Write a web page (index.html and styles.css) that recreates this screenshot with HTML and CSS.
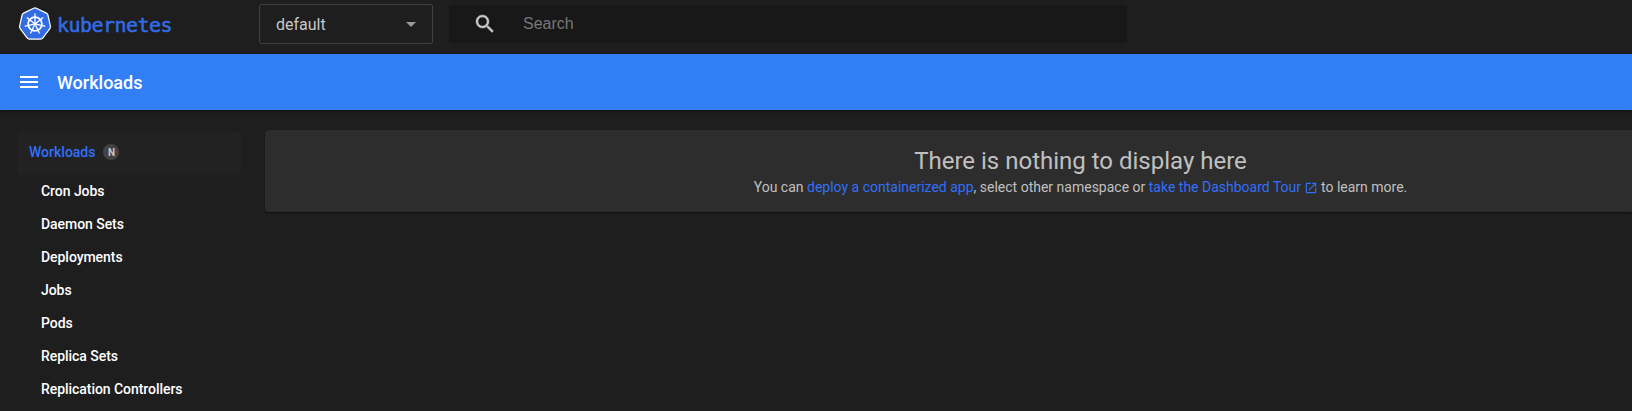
FILE: index.html
```html
<!DOCTYPE html>
<html lang="en">
<head>
<meta charset="utf-8">
<title>Kubernetes Dashboard</title>
<link rel="stylesheet" href="styles.css">
</head>
<body>
<header class="topbar">
  <a class="brand">
    <svg class="brand-logo" viewBox="0 0 34 34">
      <path d="M15.7 1.2Q17 .6 18.3 1.2L28.4 6.1Q29.6 6.7 29.9 8L32.4 19.2Q32.7 20.5 31.8 21.6L24.9 30.9Q24 32.1 22.6 32.1H11.4Q10 32.1 9.1 30.9L2.2 21.6Q1.3 20.5 1.6 19.2L4.1 8Q4.4 6.7 5.6 6.1Z" fill="#326ce5" stroke="#fff" stroke-width="1.2"/>
      <g fill="none" stroke="#fff" stroke-linecap="round">
        <circle cx="17" cy="17" r="6.9" stroke-width="1.7"/>
        <path stroke-width="1.3" d="M17 15V7M18.6 15.8L24.8 10.8M18.9 17.4L26.8 19.2M17.9 18.8L21.3 26M16.1 18.8L12.7 26M15.1 17.4L7.2 19.2M15.4 15.8L9.2 10.8"/>
      </g>
      <circle cx="17" cy="17" r="1.8" fill="#fff"/>
    </svg>
    <span class="brand-name">kubernetes</span>
  </a>
  <div class="namespace"><span>default</span><i class="caret"></i></div>
  <div class="search">
    <svg class="search-icon" viewBox="0 0 24 24"><path d="M15.5 14h-.79l-.28-.27C15.41 12.59 16 11.11 16 9.5 16 5.91 13.09 3 9.5 3S3 5.91 3 9.5 5.91 16 9.5 16c1.61 0 3.09-.59 4.23-1.57l.27.28v.79l5 4.99L20.49 19l-4.99-5zm-6 0C7.01 14 5 11.99 5 9.5S7.01 5 9.5 5 14 7.01 14 9.5 11.99 14 9.5 14z"/></svg>
    <span>Search</span>
  </div>
</header>
<div class="actionbar">
  <svg class="menu-icon" viewBox="0 0 24 24"><path d="M3 18h18v-2H3v2zm0-5h18v-2H3v2zm0-7v2h18V6H3z"/></svg>
  <h1 class="page-title">Workloads</h1>
</div>
<div class="layout">
  <nav class="sidebar">
    <a class="nav-group">Workloads <span class="badge">N</span></a>
    <a class="nav-item">Cron Jobs</a>
    <a class="nav-item">Daemon Sets</a>
    <a class="nav-item">Deployments</a>
    <a class="nav-item">Jobs</a>
    <a class="nav-item">Pods</a>
    <a class="nav-item">Replica Sets</a>
    <a class="nav-item">Replication Controllers</a>
  </nav>
  <main class="card">
    <h2 class="card-title">There is nothing to display here</h2>
    <p class="card-text">You can <a class="link">deploy a containerized app</a>, select other namespace or <a class="link">take the Dashboard Tour <svg class="open-icon" viewBox="0 0 24 24"><path d="M19 19H5V5h7V3H5c-1.11 0-2 .9-2 2v14c0 1.1.89 2 2 2h14c1.1 0 2-.9 2-2v-7h-2v7zM14 3v2h3.59l-9.83 9.83 1.41 1.41L19 6.41V10h2V3h-7z"/></svg></a> to learn more.</p>
  </main>
</div>
</body>
</html>
```

FILE: styles.css
```css
* { box-sizing: border-box; }
body {
  margin: 0;
  height: 411px;
  overflow: hidden;
  background: #1e1e1e;
  color: #fff;
  font: 14px/20px Roboto, sans-serif;
}
.topbar {
  display: flex;
  height: 54px;
  padding: 4px 0 0 18px;
}
.brand {
  display: flex;
  width: 241px;
  padding-top: 3px;
}
.brand-logo { width: 34px; height: 34px; }
.brand-name {
  margin-left: 5px;
  color: #326ce5;
  font: 20px/36px "DejaVu Sans Mono", monospace;
  letter-spacing: -.55px;
  -webkit-text-stroke: .5px #326ce5;
}
.namespace {
  display: flex;
  align-items: center;
  justify-content: space-between;
  width: 174px;
  height: 40px;
  padding: 1px 16px 0;
  border: 1px solid #404040;
  border-radius: 2px;
  color: #c7c7c7;
  font-size: 16px;
}
.caret {
  border: 5px solid transparent;
  border-top-color: #999;
  border-bottom: 0;
}
.search {
  display: flex;
  align-items: center;
  width: 678px;
  height: 38px;
  margin: 1px 0 0 16px;
  padding: 0 24px;
  border-radius: 3px;
  background: #181818;
  color: #777;
  font: 16px "Liberation Sans", Arial, sans-serif;
}
.search-icon {
  width: 24px;
  height: 24px;
  margin-right: 26px;
  fill: #c7c7c7;
  stroke: #c7c7c7;
  stroke-width: .4;
}
.actionbar {
  display: flex;
  align-items: center;
  height: 56px;
  padding-left: 17px;
  background: #327ef5;
  box-shadow: 0 1px 3px rgba(0, 0, 0, .6);
}
.menu-icon { width: 24px; height: 24px; fill: #fff; }
.page-title { margin: 2px 0 0 16px; font-size: 18px; font-weight: 500; }
.layout {
  display: flex;
  align-items: flex-start;
  padding: 20px 0 0 17px;
}
.sidebar { flex: none; width: 224px; margin-top: 1px; font-weight: 500; }
.nav-group {
  display: flex;
  align-items: center;
  height: 44px;
  margin-bottom: 1px;
  padding: 0 12px 2px;
  border-radius: 2px;
  background: #222;
  color: #326ffa;
}
.badge {
  width: 16px;
  height: 16px;
  margin-left: 8px;
  border-radius: 50%;
  background: #424242;
  color: #c7c7c7;
  font-size: 10px;
  font-weight: 700;
  line-height: 17px;
  text-align: center;
}
.nav-item {
  display: block;
  height: 33px;
  padding-left: 24px;
  letter-spacing: -.05px;
  line-height: 31px;
}
/* The card runs to the window edge; the left padding shifts its centred text. */
.card {
  flex: 1;
  height: 82px;
  margin-left: 24px;
  padding: 16px 0 0 264px;
  border-radius: 4px 0 0 4px;
  background: #2d2d2d;
  box-shadow: 0 1px 2px rgba(0, 0, 0, .5);
  color: #c0c0c0;
  text-align: center;
}
.card-title { margin: 0; font-size: 24px; font-weight: 400; line-height: 30px; }
.card-text { margin: 0; line-height: 22px; }
.link { color: #326ffa; }
.open-icon { width: 14px; height: 14px; margin: 0 0 0 -1px; vertical-align: -3px; fill: currentColor; }
```
